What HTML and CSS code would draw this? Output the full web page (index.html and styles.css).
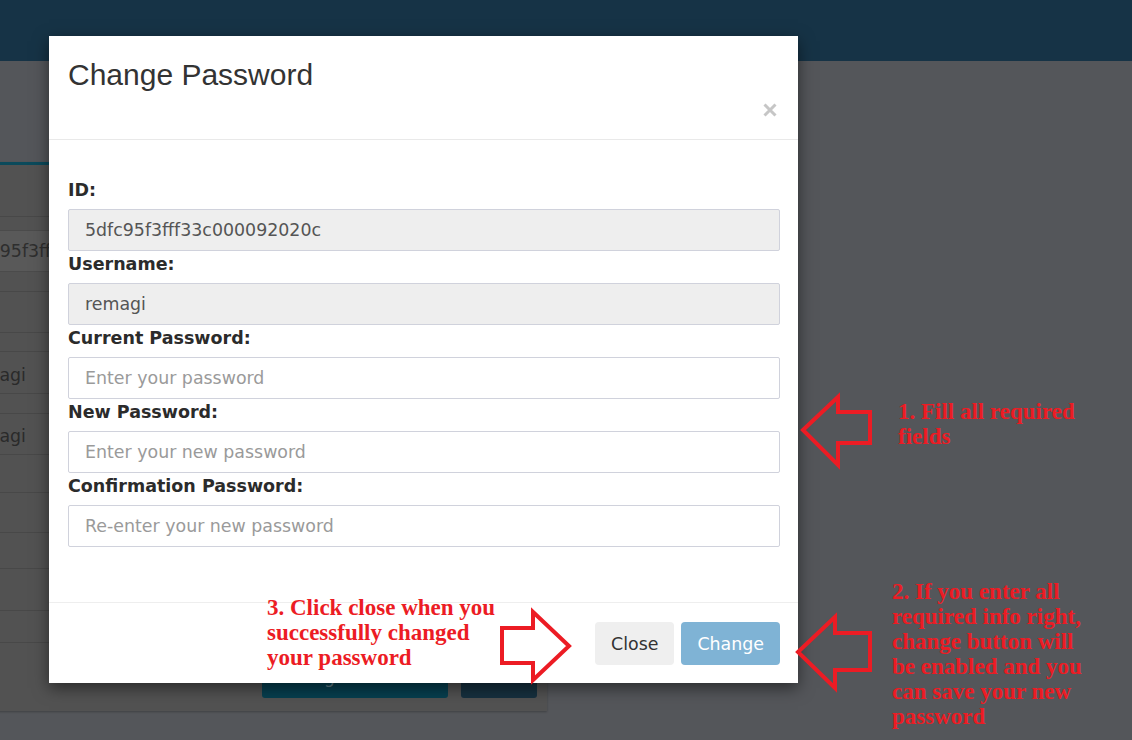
FILE: index.html
```html
<!DOCTYPE html>
<html>
<head>
<meta charset="utf-8">
<title>Change Password</title>
<link rel="stylesheet" href="styles.css">
</head>
<body>
<div class="page">
  <header class="topbar"></header>
  <main class="main">
    <section class="card">
      <div class="row r52"></div>
      <div class="row r75"><div class="ghost-input">5dfc95f3fff33c000092020c</div></div>
      <div class="row r41"></div>
      <div class="row r19"></div>
      <div class="row r42 text-row">remagi</div>
      <div class="row r20"></div>
      <div class="row r41 text-row">remagi</div>
      <div class="row r38"></div>
      <div class="row r40"></div>
      <div class="row r36"></div>
      <div class="row r42"></div>
      <div class="row r32"></div>
      <div class="card-actions">
        <button class="bg-btn bg-teal">Change Password</button>
        <button class="bg-btn bg-navy">Save</button>
      </div>
    </section>
  </main>
</div>

<div class="modal">
  <div class="modal-header">
    <h1 class="modal-title">Change Password</h1>
    <svg class="close-x" width="14" height="14" viewBox="0 0 14 14"><path d="M1.5 1.5 L12.5 12.5 M12.5 1.5 L1.5 12.5" stroke="#c6c6c6" stroke-width="3" fill="none"/></svg>
  </div>
  <div class="modal-body">
    <div class="group">
      <label class="lbl">ID:</label>
      <input class="field field-ro" type="text" value="5dfc95f3fff33c000092020c" readonly>
    </div>
    <div class="group">
      <label class="lbl">Username:</label>
      <input class="field field-ro" type="text" value="remagi" readonly>
    </div>
    <div class="group">
      <label class="lbl">Current Password:</label>
      <input class="field" type="password" placeholder="Enter your password">
    </div>
    <div class="group">
      <label class="lbl">New Password:</label>
      <input class="field" type="password" placeholder="Enter your new password">
    </div>
    <div class="group">
      <label class="lbl">Confirmation Password:</label>
      <input class="field" type="password" placeholder="Re-enter your new password">
    </div>
  </div>
  <div class="modal-footer">
    <button class="btn btn-close">Close</button>
    <button class="btn btn-change">Change</button>
  </div>
</div>

<svg class="arrows" width="1132" height="740" viewBox="0 0 1132 740">
  <polygon points="803,430 838,397 838,412 870,412 870,443 838,443 838,465" />
  <polygon points="798,652 835,617 835,633 870,633 870,670 835,670 835,688" />
  <polygon points="502,628 533,628 533,612 569,646 533,680 533,663 502,663" />
</svg>

<div class="note note-1">1. Fill all required<br>fields</div>
<div class="note note-2">2. If you enter all<br>required info right,<br>change button will<br>be enabled and you<br>can save your new<br>password</div>
<div class="note note-3">3. Click close when you<br>successfully changed<br>your password</div>
</body>
</html>
```

FILE: styles.css
```css
html, body {
  margin: 0;
  padding: 0;
}
body {
  width: 1132px;
  height: 740px;
  overflow: hidden;
  background: #54565a;
  font-family: "DejaVu Sans", Verdana, sans-serif;
  position: relative;
}

/* ---------- underlying page (dimmed) ---------- */
.page {
  width: 1132px;
  height: 740px;
  overflow: hidden;
}
.topbar {
  height: 61px;
  background: #163346;
}
.main {
  padding-top: 101px;
}
.card {
  width: 617px;
  margin-left: -70px;
  border-top: 3px solid #0b4a5b;
  background: #525252;
  box-shadow: 0 1px 2px rgba(0,0,0,0.25);
}
.row {
  box-sizing: border-box;
  border-bottom: 1px solid #484848;
  display: flex;
  align-items: center;
  color: #2a2a2a;
  font-size: 17.4px;
}
.r52 { height: 52px; }
.r75 { height: 75px; padding-left: 15px; padding-bottom: 6px; }
.r41 { height: 41px; }
.r19 { height: 19px; }
.r20 { height: 20px; }
.r38 { height: 38px; }
.r40 { height: 40px; }
.r36 { height: 36px; }
.r42 { height: 42px; }
.r32 { height: 32px; }
.text-row { padding-left: 35px; padding-top: 4px; }
.ghost-input {
  box-sizing: border-box;
  height: 42px;
  width: 560px;
  border: 1px solid #4b4b4b;
  background: #595959;
  padding-left: 16px;
  display: flex;
  align-items: center;
  color: #2e2e2e;
}
.card-actions {
  display: flex;
  justify-content: flex-end;
  gap: 13px;
  padding: 13px 10px 13px 0;
}
.bg-btn {
  height: 42px;
  border: 0;
  border-radius: 3px;
  font-family: "DejaVu Sans", sans-serif;
  font-size: 17px;
  color: #5f7d86;
  padding: 0;
}
.bg-teal { width: 186px; background: #073f4f; }
.bg-navy { width: 76px; background: #16303f; }

/* ---------- modal ---------- */
.modal {
  position: absolute;
  left: 49px;
  top: 36px;
  width: 749px;
  background: #ffffff;
  box-shadow: 0 5px 15px rgba(0,0,0,0.5);
}
.modal-header {
  box-sizing: border-box;
  height: 104px;
  padding: 22px 21px 0 19px;
  border-bottom: 1px solid #e9e9e9;
  display: flex;
  justify-content: space-between;
  align-items: flex-start;
}
.modal-title {
  margin: 0;
  font-family: "Liberation Sans", Arial, sans-serif;
  font-weight: 400;
  font-size: 30px;
  line-height: 33px;
  color: #333333;
}
.close-x {
  margin-top: 45px;
}
.modal-body {
  padding: 39px 18px 55px 19px;
  display: flex;
  flex-direction: column;
  gap: 2px;
}
.group {
  display: flex;
  flex-direction: column;
}
.lbl {
  font-size: 17.5px;
  font-weight: bold;
  line-height: 22px;
  color: #2b2b2b;
  margin-bottom: 8px;
}
.field {
  box-sizing: border-box;
  height: 42px;
  width: 100%;
  border: 1px solid #d0d2dc;
  border-radius: 2px;
  padding: 0 16px;
  font-family: "DejaVu Sans", Verdana, sans-serif;
  font-size: 17.4px;
  color: #555555;
  background: #ffffff;
  outline: none;
}
.field-ro {
  background: #eeeeee;
}
.field::placeholder {
  color: #9a9a9a;
}
.modal-footer {
  border-top: 1px solid #eeeeee;
  padding: 19px 18px 18px 19px;
  display: flex;
  justify-content: flex-end;
  gap: 7px;
}
.btn {
  height: 43px;
  border: 0;
  border-radius: 4px;
  padding: 0 16px;
  font-family: "DejaVu Sans", Verdana, sans-serif;
  font-size: 17.4px;
}
.btn-close {
  background: #efefef;
  color: #333333;
}
.btn-change {
  background: #7fb3d5;
  color: #ffffff;
}

/* ---------- annotations ---------- */
.arrows {
  position: absolute;
  left: 0;
  top: 0;
  pointer-events: none;
}
.arrows polygon {
  fill: none;
  stroke: #ec1c24;
  stroke-width: 4;
  stroke-linejoin: miter;
}
.note {
  position: absolute;
  font-family: "Liberation Serif", "Times New Roman", serif;
  font-weight: bold;
  font-size: 23px;
  line-height: 25px;
  color: #ec1c24;
  white-space: nowrap;
}
.note-1 { left: 898px; top: 399px; }
.note-2 { left: 892px; top: 579px; }
.note-3 { left: 267px; top: 595px; }
```
